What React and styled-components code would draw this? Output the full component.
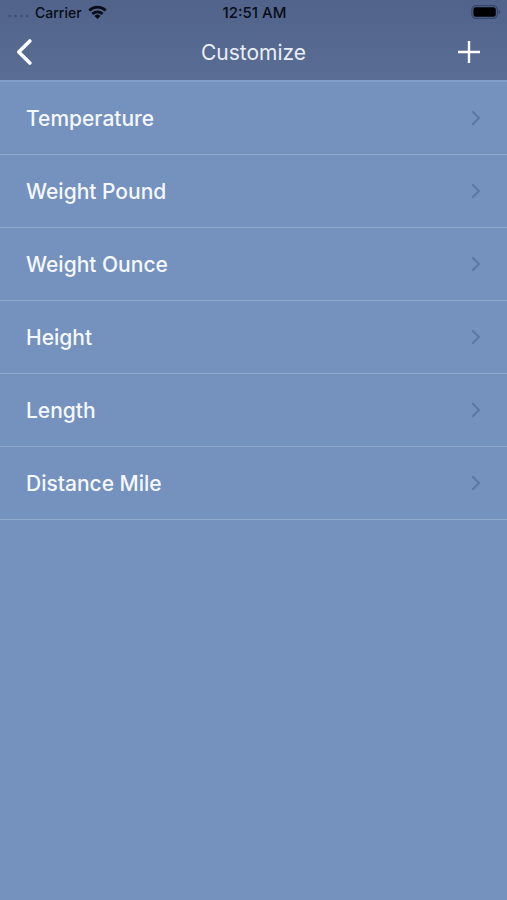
import React from 'react';
import styled, { createGlobalStyle } from 'styled-components';


const GlobalStyle = createGlobalStyle`
* {
  box-sizing: border-box;
}

body {
  margin: 0;
  background: #7591be;
  font-family: Inter, "Liberation Sans", sans-serif;
}
`

const Screen = styled.div`
min-height: 100vh;
background: #7591be;
`

const Header = styled.header`
background: linear-gradient(#51638b, #5a6d94);
border-bottom: 2px solid #829dc8;
`

const StatusBar = styled.div`
height: 24px;
padding: 0 6px 0 8px;
display: grid;
grid-template-columns: 1fr auto 1fr;
align-items: center;
color: #070c16;
font-size: 14px;
font-weight: 500;
`

const Carrier = styled.div`
display: flex;
align-items: center;
gap: 6px;
`

const Clock = styled.time`
font-size: 15px;
`

const Battery = styled.svg`
justify-self: end;
`

const NavBar = styled.div`
height: 56px;
padding: 0 16px;
display: grid;
grid-template-columns: 1fr auto 1fr;
align-items: center;
`

const Title = styled.h1`
margin: 0;
color: #e9eff9;
font-size: 21px;
font-weight: 400;
`

const IconButton = styled.button`
width: 44px;
height: 44px;
padding: 0;
display: flex;
align-items: center;
justify-content: ${props => props.$align};
background: none;
border: none;
color: white;

&:last-child {
  justify-self: end;
}

&:hover {
  cursor: pointer;
}
`

const List = styled.ul`
margin: 0;
padding: 0;
list-style: none;
`

const Item = styled.li`
border-bottom: 1px solid #91a9cd;
`

const ItemButton = styled.button`
width: 100%;
height: 72px;
padding: 0 26px;
display: flex;
align-items: center;
justify-content: space-between;
background: none;
border: none;
color: #f5f9ff;
font-family: inherit;
font-size: 21px;
font-weight: 500;
text-align: left;
cursor: pointer;
`

const units = [
    'Temperature',
    'Weight Pound',
    'Weight Ounce',
    'Height',
    'Length',
    'Distance Mile',
]

function App() {
    return (
        <Screen>
            <GlobalStyle />

            <Header>
                <StatusBar>
                    <Carrier>
                        <svg width="21" height="14" viewBox="0 0 21 14" fill="#3f4e70" aria-hidden="true">
                            <circle cx="1.8" cy="11" r="1.3" />
                            <circle cx="7.6" cy="11" r="1.3" />
                            <circle cx="13.4" cy="11" r="1.3" />
                            <circle cx="19.2" cy="11" r="1.3" />
                        </svg>
                        Carrier
                        <svg width="19" height="14" viewBox="0 0 19 14" fill="none" stroke="currentColor" strokeWidth="2.7" aria-hidden="true">
                            <path d="M1.3 5.5a11.8 11.8 0 0 1 16.4 0" />
                            <path d="M4.4 8.9a7.4 7.4 0 0 1 10.2 0" />
                            <path d="M9.5 14l-3-3.1a4.3 4.3 0 0 1 6 0z" fill="currentColor" stroke="none" />
                        </svg>
                    </Carrier>
                    <Clock>12:51 AM</Clock>
                    <Battery width="30" height="14" viewBox="0 0 30 14" aria-hidden="true">
                        <rect x="0.9" y="0.6" width="25.4" height="12.8" rx="3.8" fill="none" stroke="#35456a" strokeWidth="1.2" />
                        <rect x="2.4" y="2.2" width="22.4" height="9.6" rx="2.2" fill="#000003" />
                        <path d="M27.6 4.8c2.2.7 2.2 3.7 0 4.4z" fill="#35456a" />
                    </Battery>
                </StatusBar>

                <NavBar>
                    <IconButton type="button" aria-label="Back" $align="flex-start">
                        <svg width="16" height="26" viewBox="0 0 16 26" fill="none" stroke="currentColor" strokeWidth="3.6" strokeLinecap="round" strokeLinejoin="round">
                            <path d="M13.8 2L2.8 13l11 11" />
                        </svg>
                    </IconButton>
                    <Title>Customize</Title>
                    <IconButton type="button" aria-label="Add" $align="center">
                        <svg width="22" height="22" viewBox="0 0 22 22" fill="none" stroke="currentColor" strokeWidth="2.4">
                            <path d="M11 0v22M0 11h22" />
                        </svg>
                    </IconButton>
                </NavBar>
            </Header>

            <List>
                {units.map(unit => (
                    <Item key={unit}>
                        <ItemButton type="button">
                            {unit}
                            <svg width="10" height="16" viewBox="0 0 10 16" fill="none" stroke="#5e78a5" strokeWidth="2.1" aria-hidden="true">
                                <path d="M1.2 1.2L8 8l-6.8 6.8" />
                            </svg>
                        </ItemButton>
                    </Item>
                ))}
            </List>
        </Screen>
    )
}

export default App;
